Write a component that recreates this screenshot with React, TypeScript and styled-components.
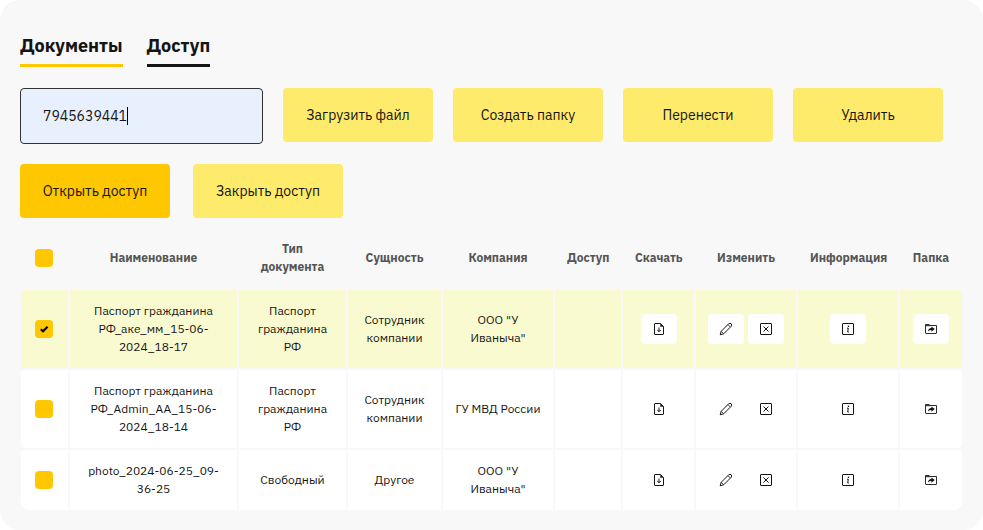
import React, { useState } from "react";
import styled, { createGlobalStyle } from "styled-components";

const GlobalStyle = createGlobalStyle`
  *, *::before, *::after { box-sizing: border-box; }
  body {
    margin: 0;
    background: #ffffff;
    color: #151515;
    font-family: "IBM Plex Sans", Roboto, "Liberation Sans", sans-serif;
  }
  button, input { font-family: inherit; color: inherit; }
`;

const Panel = styled.main`
  min-height: 100vh;
  padding: 34px 20px 18px;
  border-radius: 20px;
  background: #f8f8f8;
`;

const Tabs = styled.nav`
  display: flex;
  gap: 24px;
`;

const Tab = styled.a<{ $active?: boolean }>`
  padding-bottom: 6px;
  border-bottom: 3px solid ${(p) => (p.$active ? "#ffc700" : "#151515")};
  color: #151515;
  font-size: 18px;
  font-weight: 700;
  line-height: 24px;
  text-decoration: none;
`;

const Toolbar = styled.div`
  display: flex;
  flex-wrap: wrap;
  gap: 20px;
  margin-top: 21px;
`;

const AccessActions = styled.div`
  display: flex;
  gap: 23px;
  margin-top: 20px;
`;

const SearchBox = styled.div`
  position: relative;
  width: 243px;
`;

const SearchInput = styled.input`
  display: block;
  width: 100%;
  height: 56px;
  padding: 0 22px;
  border: 1px solid #333333;
  border-radius: 4px;
  outline: none;
  background: #e8f0fe;
  font-size: 14px;
  line-height: 18px;
`;

const Caret = styled.span`
  position: absolute;
  top: 19px;
  left: 107px;
  width: 1px;
  height: 18px;
  background: #000000;
`;

const ActionButton = styled.button<{ $primary?: boolean }>`
  width: 150px;
  height: 54px;
  padding: 0;
  border: 0;
  border-radius: 4px;
  background: ${(p) => (p.$primary ? "#ffc700" : "#ffeb6b")};
  font-size: 14px;
  line-height: 18px;
  cursor: pointer;
`;

const TableWrap = styled.div`
  margin: 8px -1px 0;
`;

const Table = styled.table`
  width: 100%;
  table-layout: fixed;
  border-collapse: separate;
  border-spacing: 2px;
  font-size: 12px;
  line-height: 18px;
  text-align: center;
`;

const Column = styled.col<{ $width: number }>`
  width: ${(p) => p.$width}px;
`;

const HeadCell = styled.th`
  padding: 12px;
  color: #555555;
  font-weight: 700;
`;

const Row = styled.tr<{ $selected: boolean }>`
  & > td { background: ${(p) => (p.$selected ? "#f9facf" : "#ffffff")}; }
  & > td:first-child { border-radius: 4px 0 0 4px; }
  & > td:last-child { border-radius: 0 4px 4px 0; }
  &:last-child > td:first-child { border-radius: 4px 0 0 8px; }
  &:last-child > td:last-child { border-radius: 0 4px 8px 0; }
`;

const Cell = styled.td`
  padding: 12px;
`;

const Check = styled.input`
  display: block;
  appearance: none;
  width: 18px;
  height: 18px;
  margin: 0 2px;
  border-radius: 4px;
  background: #ffc700;
  cursor: pointer;
  &:checked {
    background: #ffc700
      url("data:image/svg+xml,%3Csvg xmlns='http://www.w3.org/2000/svg' viewBox='0 0 18 18'%3E%3Cpath d='M5.8 9.3 8 11.3 12.6 6.8' fill='none' stroke='%23000' stroke-width='2.2'/%3E%3C/svg%3E");
  }
`;

const IconGroup = styled.div`
  display: flex;
  justify-content: center;
  gap: 4px;
`;

const IconButton = styled.button`
  display: flex;
  align-items: center;
  justify-content: center;
  width: 36px;
  height: 30px;
  padding: 0;
  border: 0;
  border-radius: 4px;
  background: #ffffff;
  cursor: pointer;
`;

const Svg = styled.svg`
  width: 14px;
  height: 14px;
  fill: none;
  stroke: #151515;
  stroke-width: 1;
`;

const DownloadIcon = () => (
  <Svg viewBox="0 0 14 14">
    <path d="M2.5 2Q2.5 1.5 3 1.5H8.5L11.5 4.5V12Q11.5 12.5 11 12.5H3Q2.5 12.5 2.5 12Z" />
    <path d="M8.3 1.3V4.7H11.7Z" fill="#151515" stroke="none" />
    <path d="M7 5.5V9.5M5.2 8 7 9.8 8.8 8" />
  </Svg>
);

const PencilIcon = () => (
  <Svg viewBox="0 0 14 14">
    <path d="M1.2 12.8 2.2 9.3 9.8 1.7Q11 .8 12.2 1.8 13.2 3 12.3 4.2L4.7 11.8Z" />
    <path d="M2.2 9.3 4.7 11.8M9 2.7 11.3 5" strokeWidth=".8" />
  </Svg>
);

const CrossIcon = () => (
  <Svg viewBox="0 0 14 14">
    <rect x="1.5" y="1.5" width="11" height="11" rx=".5" />
    <path d="M4.5 4.5 9.5 9.5M9.5 4.5 4.5 9.5" />
  </Svg>
);

const InfoIcon = () => (
  <Svg viewBox="0 0 14 14">
    <rect x="1.5" y="1.5" width="11" height="11" rx=".5" />
    <path d="M7.5 3.6V5" strokeWidth="1.3" />
    <path d="M6 6.2H7.3L6.7 10H7.8" />
  </Svg>
);

const FolderIcon = () => (
  <Svg viewBox="0 0 14 14">
    <path d="M1.5 11V2.5H5.2L6.2 3.5H12.5V11Q12.5 11.5 12 11.5H2Q1.5 11.5 1.5 11Z" strokeWidth=".9" />
    <path d="M1.5 3.7H6.5" />
    <path d="M4 9.4Q4.2 6.2 7.4 6V4.5L10.8 7.1 7.4 9.7V8Q5.5 8 4 9.4Z" fill="#151515" stroke="none" />
  </Svg>
);

const columns = [
  { title: "Наименование", width: 167 },
  { title: "Тип документа", width: 107 },
  { title: "Сущность", width: 93 },
  { title: "Компания", width: 110 },
  { title: "Доступ", width: 66 },
  { title: "Скачать", width: 71 },
  { title: "Изменить", width: 100 },
  { title: "Информация", width: 100 },
  { title: "Папка", width: 62 },
];

const documents = [
  { name: "Паспорт гражданина РФ_аке_мм_15-06-2024_18-17", type: "Паспорт гражданина РФ", entity: "Сотрудник компании", company: 'ООО "У Иваныча"' },
  { name: "Паспорт гражданина РФ_Admin_AA_15-06-2024_18-14", type: "Паспорт гражданина РФ", entity: "Сотрудник компании", company: "ГУ МВД России" },
  { name: "photo_2024-06-25_09-36-25", type: "Свободный", entity: "Другое", company: 'ООО "У Иваныча"' },
];

export default function App() {
  const [query, setQuery] = useState("7945639441");
  const [focused, setFocused] = useState(false);
  const [selected, setSelected] = useState<number[]>([0]);
  const toggle = (i: number) =>
    setSelected((s) => (s.includes(i) ? s.filter((x) => x !== i) : [...s, i]));
  const all = selected.length === documents.length;

  return (
    <>
      <GlobalStyle />
      <Panel>
        <Tabs>
          <Tab href="#documents" $active>Документы</Tab>
          <Tab href="#access">Доступ</Tab>
        </Tabs>
        <Toolbar>
          <SearchBox>
            <SearchInput
              aria-label="Поиск"
              value={query}
              onFocus={() => setFocused(true)}
              onChange={(e) => setQuery(e.target.value)}
            />
            {!focused && <Caret />}
          </SearchBox>
          <ActionButton type="button">Загрузить файл</ActionButton>
          <ActionButton type="button">Создать папку</ActionButton>
          <ActionButton type="button">Перенести</ActionButton>
          <ActionButton type="button">Удалить</ActionButton>
        </Toolbar>
        <AccessActions>
          <ActionButton type="button" $primary>Открыть доступ</ActionButton>
          <ActionButton type="button">Закрыть доступ</ActionButton>
        </AccessActions>
        <TableWrap>
          <Table>
            <colgroup>
              <Column $width={47} />
              {columns.map((c) => <Column key={c.title} $width={c.width} />)}
            </colgroup>
            <thead>
              <tr>
                <HeadCell>
                  <Check
                    type="checkbox"
                    aria-label="Выбрать все"
                    checked={all}
                    onChange={() => setSelected(all ? [] : documents.map((_, i) => i))}
                  />
                </HeadCell>
                {columns.map((c) => <HeadCell key={c.title} scope="col">{c.title}</HeadCell>)}
              </tr>
            </thead>
            <tbody>
              {documents.map((d, i) => (
                <Row key={d.name} $selected={selected.includes(i)}>
                  <Cell>
                    <Check
                      type="checkbox"
                      aria-label={d.name}
                      checked={selected.includes(i)}
                      onChange={() => toggle(i)}
                    />
                  </Cell>
                  <Cell>{d.name}</Cell>
                  <Cell>{d.type}</Cell>
                  <Cell>{d.entity}</Cell>
                  <Cell>{d.company}</Cell>
                  <Cell />
                  <Cell>
                    <IconGroup>
                      <IconButton type="button" aria-label="Скачать"><DownloadIcon /></IconButton>
                    </IconGroup>
                  </Cell>
                  <Cell>
                    <IconGroup>
                      <IconButton type="button" aria-label="Изменить"><PencilIcon /></IconButton>
                      <IconButton type="button" aria-label="Удалить"><CrossIcon /></IconButton>
                    </IconGroup>
                  </Cell>
                  <Cell>
                    <IconGroup>
                      <IconButton type="button" aria-label="Информация"><InfoIcon /></IconButton>
                    </IconGroup>
                  </Cell>
                  <Cell>
                    <IconGroup>
                      <IconButton type="button" aria-label="Папка"><FolderIcon /></IconButton>
                    </IconGroup>
                  </Cell>
                </Row>
              ))}
            </tbody>
          </Table>
        </TableWrap>
      </Panel>
    </>
  );
}
